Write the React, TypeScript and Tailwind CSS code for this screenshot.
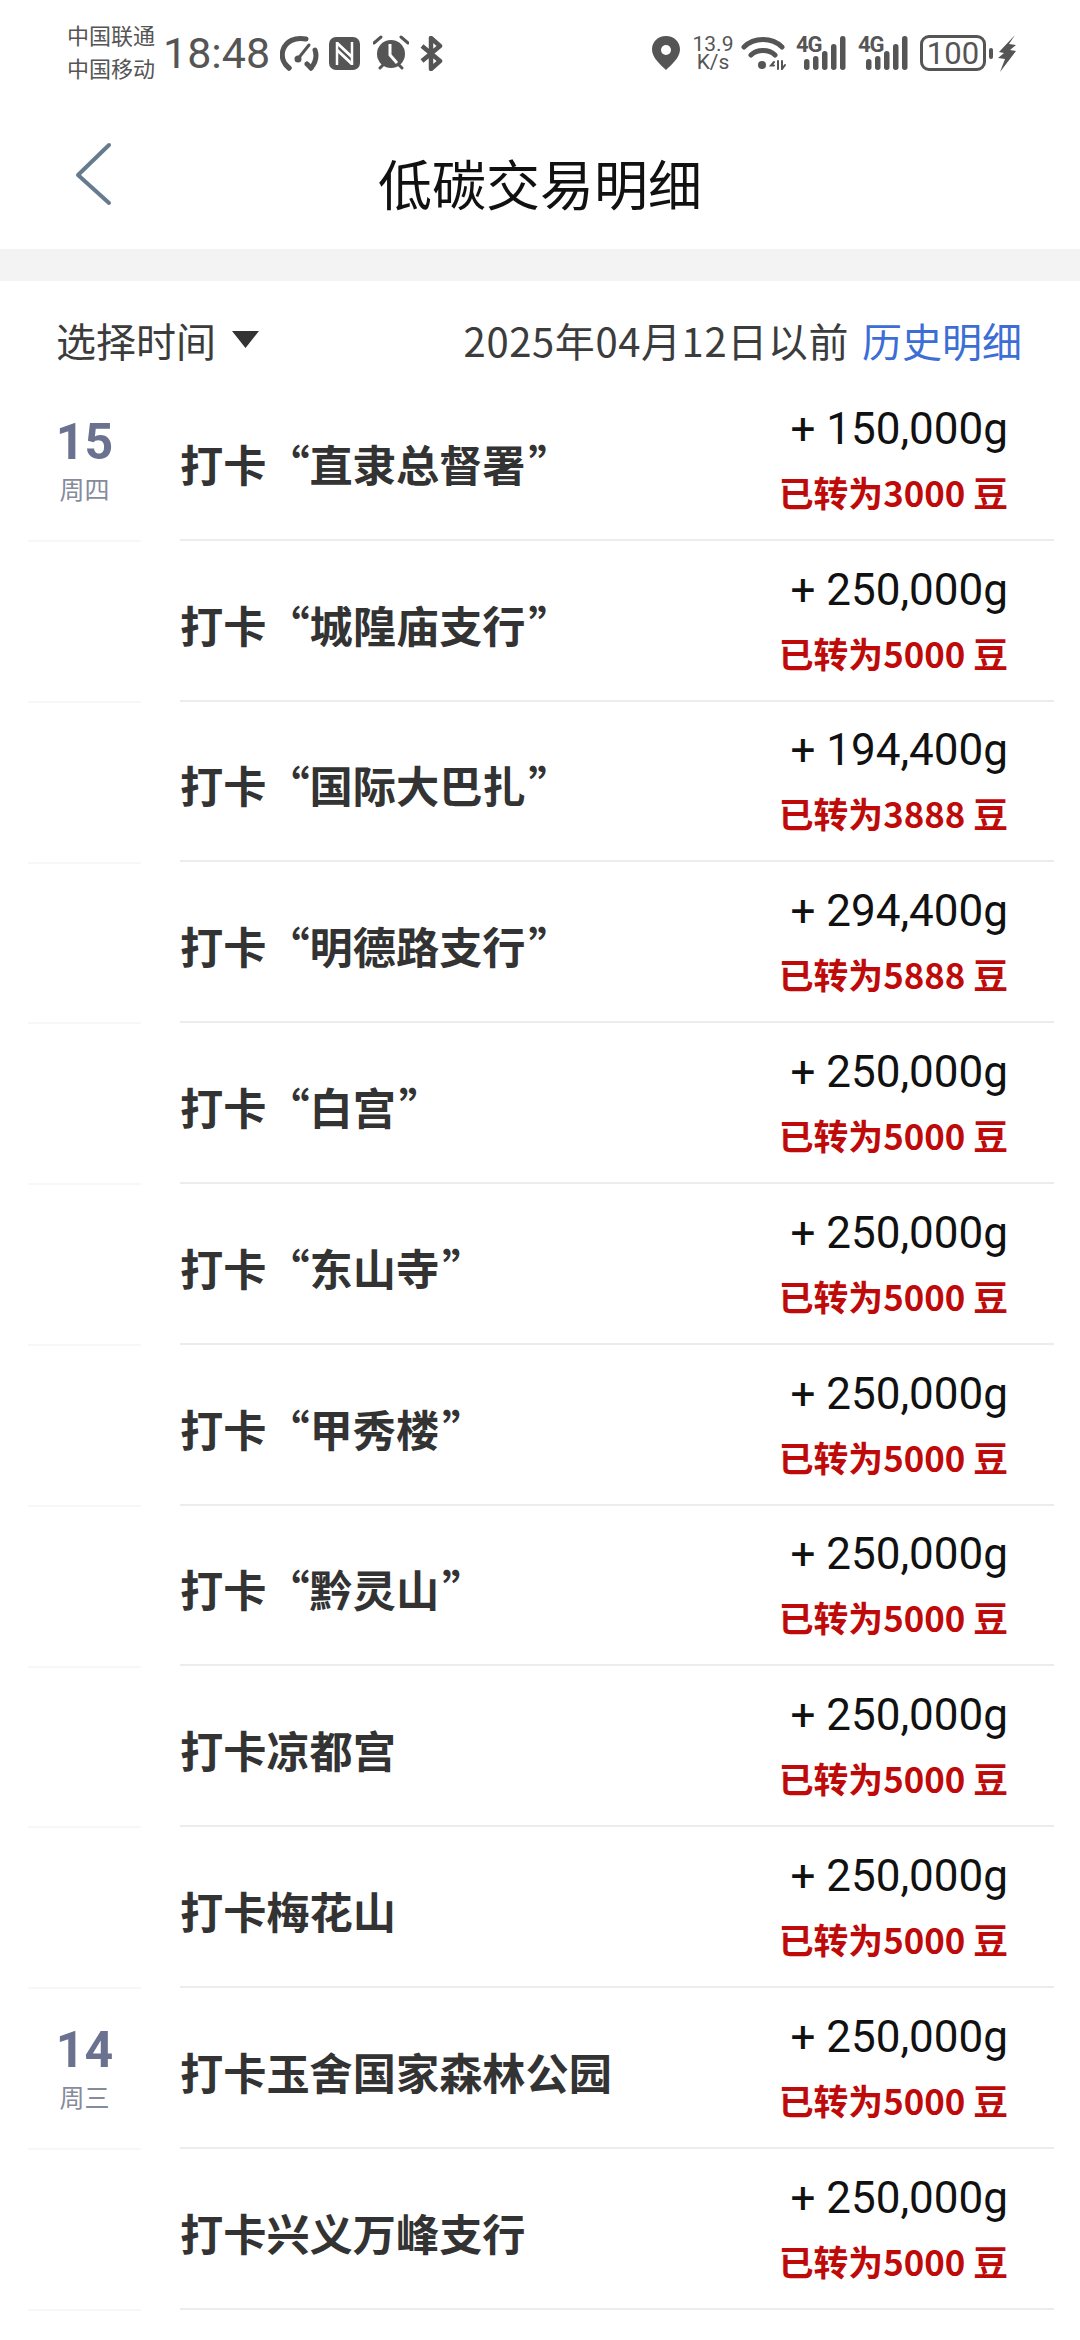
const Signal = () => (
  <div className="relative w-[50px] h-[34px]">
    <span className="absolute left-0 -top-[1px] text-[22px] leading-[20px] font-bold text-[#555] tracking-[-1px]" style={{ fontFamily: "Roboto, sans-serif" }}>4G</span>
    <svg className="absolute left-0 top-0" width="50" height="34" viewBox="0 0 50 34" fill="#555">
      <rect x="8" y="23" width="5.5" height="11" rx="2.700" />
      <rect x="17" y="20" width="5.5" height="14" rx="2.700" />
      <rect x="26" y="15" width="5.5" height="19" rx="2.700" />
      <rect x="35" y="8" width="5.5" height="26" rx="2.700" />
      <rect x="44" y="0" width="5.5" height="34" rx="2.700" />
    </svg>
  </div>
);

const StatusBar = () => (
  <div className="h-[100px] pt-[6px] flex items-center text-[#555] pl-[67px]" style={{ fontFamily: "'Noto Sans CJK SC', sans-serif" }}>
    <div className="w-[90px] text-[22px] leading-[33px] -mt-[4px]">
      <div>中国联通</div>
      <div>中国移动</div>
    </div>
    <span className="ml-[6px] text-[43px] leading-none w-[114px]" style={{ fontFamily: "Roboto, sans-serif" }}>18:48</span>
    <svg className="ml-[3px]" width="40" height="36" viewBox="0 0 40 36" fill="none" stroke="#555" strokeWidth="5" strokeLinecap="round">
      <path d="M9 33C3 28 1 22 3 15C6 6 15 2 26 4" />
      <path d="M35 15C37 21 36 27 31 33" />
      <path d="M31 33L27 29" />
      <path d="M9 33L6 30" />
      <path d="M17 25L29 10" strokeWidth="3" />
      <circle cx="18" cy="24" r="3.5" fill="#555" stroke="none" />
    </svg>
    <svg className="ml-[9px]" width="31" height="33" viewBox="0 0 31 33">
      <rect width="31" height="33" rx="7" fill="#555" />
      <path d="M8 5V28M23 5V28" stroke="#fff" strokeWidth="2.5" />
      <path d="M8 6L23 20M8 13L23 27" stroke="#fff" strokeWidth="3" />
    </svg>
    <svg className="ml-[13px]" width="36" height="36" viewBox="0 0 36 36">
      <circle cx="18" cy="19" r="14" fill="#555" />
      <path d="M1 8L8 2M35 8L28 2M7 33L10 30M29 33L26 30" stroke="#555" strokeWidth="3" strokeLinecap="round" />
      <path d="M17 9V20L24 28" stroke="#fff" strokeWidth="3" fill="none" />
    </svg>
    <svg className="ml-[11px]" width="23" height="35" viewBox="0 0 23 35" fill="none" stroke="#555" strokeWidth="4.500" strokeLinejoin="round">
      <path d="M2 10L20 25L11 33V2L20 10L2 25" />
    </svg>
    <svg className="ml-[208px]" width="30" height="34" viewBox="0 0 30 34">
      <path d="M15 0C6.700 0 1 6 1 13.500C1 22 10 29 15 34C20 29 29 22 29 13.500C29 6 23.300 0 15 0Z" fill="#555" />
      <circle cx="15" cy="14" r="5" fill="#fff" />
    </svg>
    <div className="ml-[10px] w-[44px] text-[21px] leading-[18px] text-center" style={{ fontFamily: "Roboto, sans-serif" }}>
      <div>13.9</div>
      <div>K/s</div>
    </div>
    <svg className="ml-[6px]" width="46" height="34" viewBox="0 0 46 34" fill="none" stroke="#555" strokeWidth="5" strokeLinecap="round">
      <path d="M3 11C13 1 31 1 41 11" />
      <path d="M10 19C16 13 28 13 34 19" />
      <circle cx="21" cy="29" r="4" fill="#555" stroke="none" />
      <path d="M33 26L30 29.500H33M37 25V33M41 25V33L44 29" strokeWidth="2" />
    </svg>
    <div className="ml-[9px]"><Signal /></div>
    <div className="ml-[12px]"><Signal /></div>
    <div className="ml-[12px] w-[66px] h-[36px] border-[3px] border-[#555] rounded-[9px] flex items-center justify-center text-[31px] leading-none" style={{ fontFamily: "Roboto, sans-serif" }}>100</div>
    <div className="ml-[3px] w-[4px] h-[11px] bg-[#555] rounded-[2px]" />
    <svg className="ml-[5px]" width="18" height="37" viewBox="0 0 18 37" fill="#555">
      <path d="M17 0L1 17L6 18L0 23L7 24L2 37L18 16L12 15L18 10L11 9Z" />
    </svg>
  </div>
);

type Row = { title: string; amount: string; beans: string; day?: string; week?: string };

const rows: Row[] = [
  { title: "打卡“直隶总督署”", amount: "+ 150,000g", beans: "3000", day: "15", week: "周四" },
  { title: "打卡“城隍庙支行”", amount: "+ 250,000g", beans: "5000" },
  { title: "打卡“国际大巴扎”", amount: "+ 194,400g", beans: "3888" },
  { title: "打卡“明德路支行”", amount: "+ 294,400g", beans: "5888" },
  { title: "打卡“白宫”", amount: "+ 250,000g", beans: "5000" },
  { title: "打卡“东山寺”", amount: "+ 250,000g", beans: "5000" },
  { title: "打卡“甲秀楼”", amount: "+ 250,000g", beans: "5000" },
  { title: "打卡“黔灵山”", amount: "+ 250,000g", beans: "5000" },
  { title: "打卡凉都宫", amount: "+ 250,000g", beans: "5000" },
  { title: "打卡梅花山", amount: "+ 250,000g", beans: "5000" },
  { title: "打卡玉舍国家森林公园", amount: "+ 250,000g", beans: "5000", day: "14", week: "周三" },
  { title: "打卡兴义万峰支行", amount: "+ 250,000g", beans: "5000" },
];

const ListRow = ({ r }: { r: Row }) => {
  const quoted = r.title.endsWith("”");
  return (
    <div className="flex h-[160.8px]">
      <div className="w-[180px] shrink-0 pl-[28px]">
        <div className="w-[113px] h-[162px] border-b-2 border-[#f7f7f7] flex flex-col items-center">
          {r.day && (
            <>
              <div className="mt-[34px] text-[50px] leading-[56px] font-bold text-[#6a7290]" style={{ fontFamily: "Roboto, sans-serif" }}>{r.day}</div>
              <div className="mt-[3px] text-[25px] leading-[30px] text-[#858b9b]">{r.week}</div>
            </>
          )}
        </div>
      </div>
      <div className="flex-1 mr-[26px] border-b-2 border-[#ececec] flex items-center justify-between pr-[46px]">
        <div className="text-[43.200px] leading-[50px] font-bold text-[#333] mt-[7px]">
          {quoted ? r.title.slice(0, -1) : r.title}
          {quoted && <span className="ml-[3px]">”</span>}
        </div>
        <div className="flex flex-col items-end -mt-[1px]">
          <div className="text-[44px] leading-[50px] text-[#111]" style={{ fontFamily: "Roboto, sans-serif" }}>{r.amount}</div>
          <div className="mt-[16px] text-[34.800px] leading-[44px] font-bold text-[#bf0a0a]">已转为{r.beans} 豆</div>
        </div>
      </div>
    </div>
  );
};

export default function App() {
  return (
    <div className="w-[1080px] h-[2340px] bg-white overflow-hidden" style={{ fontFamily: "'Noto Sans CJK SC', sans-serif" }}>
      <StatusBar />
      <div className="h-[149px] flex items-center justify-center relative">
        <svg className="absolute left-[74px] top-[42px]" width="40" height="64" viewBox="0 0 40 64" fill="none" stroke="#667b8d" strokeWidth="4" strokeLinecap="round" strokeLinejoin="round">
          <path d="M35 3L4 33L35 61" />
        </svg>
        <h1 className="text-[54px] leading-[64px] text-[#111] mt-[16px] font-normal">低碳交易明细</h1>
      </div>
      <div className="h-[32px] bg-[#f3f3f3]" />
      <div className="h-[99px] pt-[18px] pl-[56px] pr-[58px] flex items-center justify-between text-[40px] leading-[50px] text-[#3c3c3c]">
        <div className="flex items-center">
          <span>选择时间</span>
          <svg className="ml-[16px]" width="27" height="17" viewBox="0 0 27 17" fill="#333"><path d="M0 0H27L13.500 17Z" /></svg>
        </div>
        <div>
          <span className="tracking-[0.6px]">2025年04月12日以前</span>
          <span className="ml-[13px] text-[#3c6ed6]">历史明细</span>
        </div>
      </div>
      {rows.map((r, i) => (
        <ListRow key={i} r={r} />
      ))}
    </div>
  );
}
